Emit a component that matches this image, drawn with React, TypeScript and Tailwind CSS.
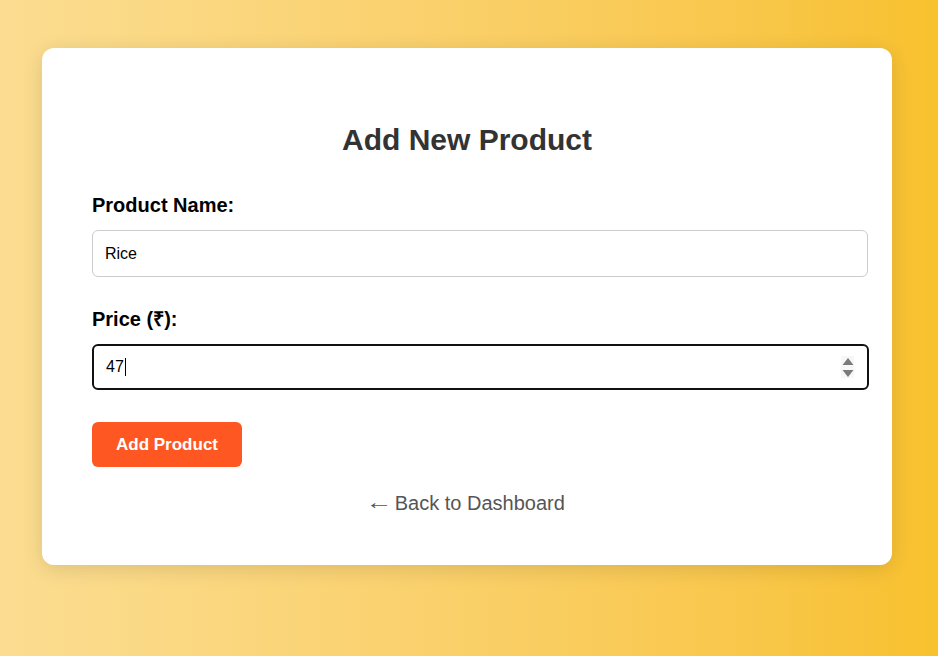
export default function App() {
  return (
    <div className="min-h-screen w-full bg-gradient-to-r from-[#fbdd91] to-[#f8c12d] pt-[48px] font-['Liberation_Sans',Arial,sans-serif]">
      {/* Card */}
      <div className="ml-[42px] w-[850px] rounded-xl bg-white px-[50px] pb-[50px] pt-[50px] shadow-[0_4px_20px_rgba(0,0,0,0.12)]">
        <h2 className="mt-[25px] text-center text-[30px] font-bold leading-[34px] text-[#333]">Add New Product</h2>

        <form className="mt-[37px]" onSubmit={(e) => e.preventDefault()}>
          <label className="block text-[20px] font-bold leading-[23px] text-black">Product Name:</label>
          <input
            type="text"
            defaultValue="Rice"
            readOnly
            className="mt-[13px] block h-[47px] w-[776px] rounded-md border border-[#ccc] px-3 text-[16px] text-black outline-none"
          />

          <label className="mt-[31px] block text-[20px] font-bold leading-[23px] text-black">Price (₹):</label>
          <div className="mt-[13px] flex h-[46px] w-[777px] items-center rounded-md border-2 border-[#111] pl-3 pr-[13px] text-[16px] text-black">
            <span>47</span>
            <span className="ml-[1px] h-[18px] w-px bg-black" />
            <div className="ml-auto flex h-[22px] w-[13px] items-center justify-center bg-[#f7f7f7]">
              <svg width="12" height="21" viewBox="0 0 12 21">
                <path d="M6 1 L11.5 8 L0.5 8 Z" fill="#7a7a7a" />
                <path d="M0.5 13 L11.5 13 L6 20 Z" fill="#7a7a7a" />
              </svg>
            </div>
          </div>

          <button
            type="submit"
            className="mt-[32px] h-[45px] rounded-md bg-[#ff5722] px-6 text-[17px] font-bold text-white"
          >
            Add Product
          </button>
        </form>

        <div className="mt-[25px] text-center text-[20px] leading-[23px]">
          <a href="#" className="text-[#555]">
            <span className="inline-block -translate-y-[1px] scale-x-[1.35]">←</span> Back to Dashboard
          </a>
        </div>
      </div>
    </div>
  );
}
